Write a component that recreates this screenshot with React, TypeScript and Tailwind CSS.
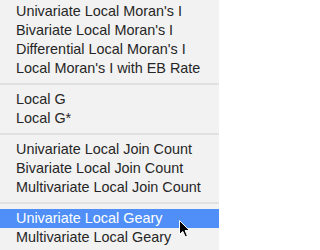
import React from "react";

const groups: string[][] = [
  [
    "Univariate Local Moran's I",
    "Bivariate Local Moran's I",
    "Differential Local Moran's I",
    "Local Moran's I with EB Rate",
  ],
  ["Local G", "Local G*"],
  [
    "Univariate Local Join Count",
    "Bivariate Local Join Count",
    "Multivariate Local Join Count",
  ],
  ["Univariate Local Geary", "Multivariate Local Geary"],
];

export default function App() {
  return (
    <div
      className="relative w-[219px] h-[250px] overflow-hidden bg-[#f2f2f2] pt-[2px] text-[14.4px] leading-[19px] text-[#262626]"
      style={{ fontFamily: '"Liberation Sans", Arial, sans-serif' }}
    >
      {groups.map((g, gi) => (
        <div key={gi}>
          {gi > 0 && (
            <div className="h-[12px] flex items-center">
              <div className="h-[2px] w-full bg-[#e1e1e1]" />
            </div>
          )}
          {g.map((item) => {
            const active = item === "Univariate Local Geary";
            return (
              <div
                key={item}
                className={
                  active
                    ? "h-[19px] pl-[16px] whitespace-nowrap bg-[#4f8ff7] text-white"
                    : "h-[19px] pl-[16px] whitespace-nowrap"
                }
              >
                {item}
              </div>
            );
          })}
        </div>
      ))}
      <svg
        className="absolute left-[178px] top-[219px]"
        width="14"
        height="20"
        viewBox="0 0 14 20"
      >
        <path
          d="M1.5 1.5 L1.5 15.5 L4.8 12.4 L7.2 17.8 L9.4 16.8 L7.1 11.6 L11.6 11.6 Z"
          fill="#000"
          stroke="#fff"
          strokeWidth="1"
          strokeLinejoin="round"
        />
      </svg>
    </div>
  );
}
